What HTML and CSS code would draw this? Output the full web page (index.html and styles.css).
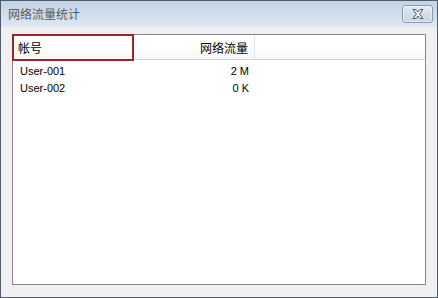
FILE: index.html
```html
<!DOCTYPE html>
<html>
<head>
<meta charset="utf-8">
<link rel="stylesheet" href="styles.css">
</head>
<body>
<div class="window">
  <div class="titlebar">
    <span class="title">网络流量统计</span>
    <div class="close">
      <svg width="18" height="12" viewBox="0 0 18 12">
        <path d="M4 1.5 L7 1.5 L9 4 L11 1.5 L14 1.5 L10.6 6 L14 10.5 L11 10.5 L9 8 L7 10.5 L4 10.5 L7.4 6 Z" fill="#f4f7fa" stroke="#4a5a6c" stroke-width="1" stroke-linejoin="round"/>
      </svg>
    </div>
  </div>
  <div class="client">
    <div class="listbox">
      <div class="header">
        <div class="hcell col1 marked">帐号</div>
        <div class="hcell col2">网络流量</div>
        <div class="hfill"></div>
      </div>
      <div class="rows">
        <div class="row"><div class="cell col1">User-001</div><div class="cell col2">2 M</div></div>
        <div class="row"><div class="cell col1">User-002</div><div class="cell col2">0 K</div></div>
      </div>
    </div>
  </div>
</div>
</body>
</html>
```
FILE: styles.css
```css
html, body {
  margin: 0;
  padding: 0;
  background: #ffffff;
}
.window {
  width: 438px;
  height: 298px;
  box-sizing: border-box;
  border: 1px solid #505c6a;
  background: #f0f0f0;
  display: flex;
  flex-direction: column;
  font-family: "Liberation Sans", "Noto Sans CJK SC", sans-serif;
}
.titlebar {
  height: 26px;
  flex: none;
  display: flex;
  align-items: flex-start;
  justify-content: space-between;
  background: linear-gradient(to bottom, #c2d3e6 0%, #d3dfec 60%, #dfe8f2 100%);
  border-bottom: 0;
}
.title {
  font-family: "Noto Sans CJK SC", sans-serif;
  font-size: 12px;
  line-height: 14px;
  color: #555a60;
  padding: 6px 0 0 7px;
}
.close {
  width: 29px;
  height: 16px;
  margin: 4px 4px 0 0;
  border: 1px solid #8a9bb0;
  border-radius: 3px;
  background: linear-gradient(to bottom, #e6edf5 0%, #d2dde9 50%, #c9d6e4 100%);
  display: flex;
  align-items: center;
  justify-content: center;
  box-shadow: inset 0 0 0 1px rgba(255,255,255,0.5);
}
.client {
  flex: 1;
  padding: 7px 11px 12px 11px;
  display: flex;
  background: #f0f0f0;
}
.listbox {
  flex: 1;
  border: 1px solid #828790;
  background: #ffffff;
  display: flex;
  flex-direction: column;
}
.header {
  height: 24px;
  border-bottom: 1px solid #d5d5d5;
  display: flex;
  background: linear-gradient(to bottom, #ffffff 0%, #ffffff 55%, #f5f6f7 100%);
  font-family: "Noto Sans CJK SC", sans-serif;
  font-size: 12px;
  color: #000;
}
.hcell {
  position: relative;
  box-sizing: border-box;
  display: flex;
  align-items: center;
  border-right: 1px solid #e3e4e6;
}
.hcell.col1 {
  width: 121px;
  padding-left: 5px;
}
.hcell.col2 {
  width: 121px;
  justify-content: flex-end;
  padding-right: 6px;
}
.hcell.marked::after {
  content: "";
  position: absolute;
  left: -1px;
  top: -1px;
  right: -1px;
  bottom: -2px;
  border: 2px solid #a0222a;
}
.hfill {
  flex: 1;
}
.rows {
  padding-top: 2px;
}
.row {
  display: flex;
  height: 17px;
  align-items: center;
  font-size: 11px;
  color: #000;
}
.cell.col1 {
  width: 121px;
  box-sizing: border-box;
  padding-left: 7px;
}
.cell.col2 {
  width: 121px;
  box-sizing: border-box;
  text-align: right;
  padding-right: 6px;
}
```
